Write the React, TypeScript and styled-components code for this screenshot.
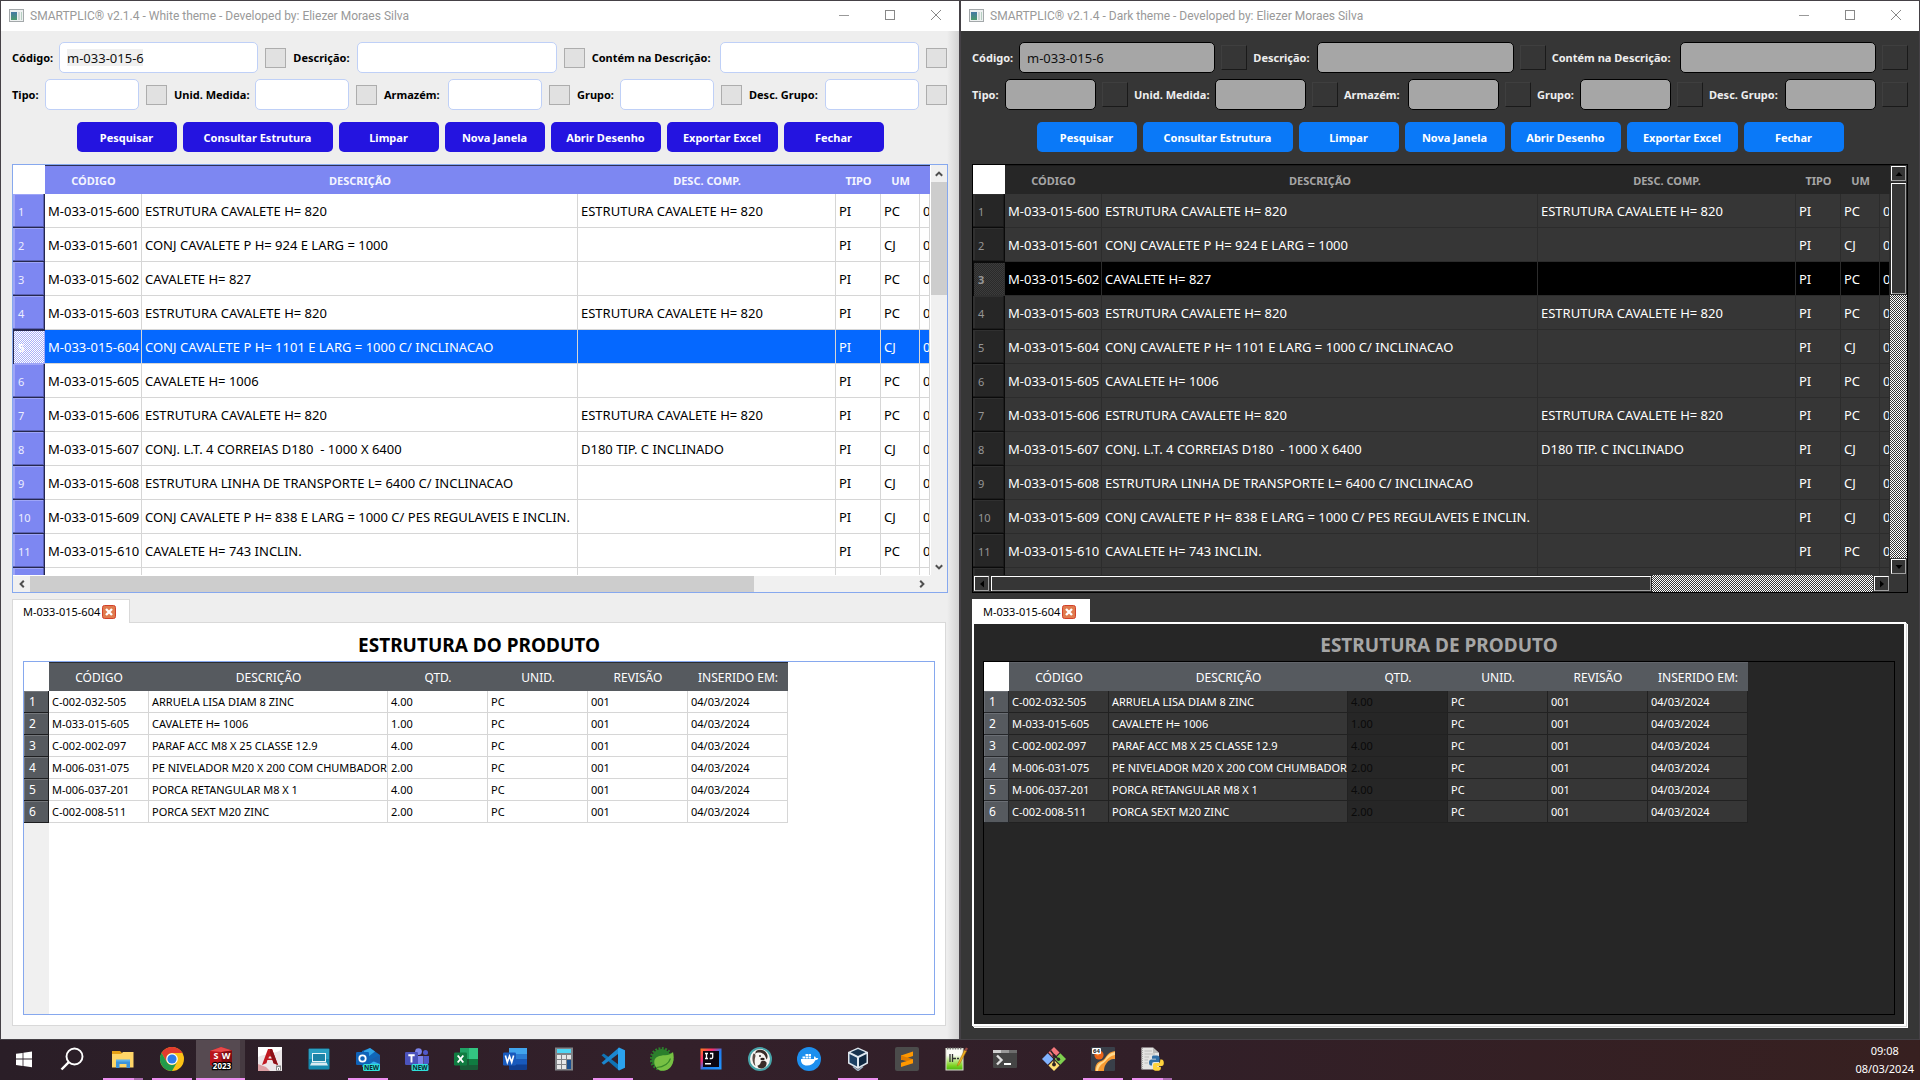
import React from "react";
import styled, { createGlobalStyle, css, ThemeProvider } from "styled-components";

const GlobalStyle = createGlobalStyle`
  *, *::before, *::after { box-sizing: border-box; }
  body {
    margin: 0;
    background: #2a1e26;
    font-family: "Noto Sans", "Open Sans", "Liberation Sans", sans-serif;
  }
  button, input { font-family: inherit; }
`;

const checker = (a: string, b: string) =>
  `repeating-conic-gradient(${a} 0 25%, ${b} 0 50%) 0 0 / 2px 2px`;

const whiteTheme = {
  id: "white",
  title: "SMARTPLIC® v2.1.4 - White theme - Developed by: Eliezer Moraes Silva",
  heading: "ESTRUTURA DO PRODUTO",
  dark: false,
  selected: 4,
  bg: "#eeeeee",
  label: "#000000",
  inputBg: "#ffffff",
  inputBorder: "#bfd0f7",
  textMark: "#f0f0f0",
  clearWidth: "23px",
  action: "#2414e0",
  frame: "#86a8ee",
  headTop: "#2c2f55",
  headBg: "#7d87f2",
  headText: "#f4f5ff",
  rowHead: "#7d87f2",
  rowHeadText: "#eceeff",
  rowHeadLight: "#9ea5f7",
  rowHeadDark: "#26284f",
  rowHeadShade: "#5a61b4",
  cellBg: "#ffffff",
  cellText: "#000000",
  line: "#d6d6d6",
  selBg: "#0568ff",
  selHead: checker("#ffffff", "#a9b0f8"),
  thumbH: "82%",
  paneBg: "#ffffff",
  headingText: "#000000",
  innerFrame: "#86a8ee",
  innerCorner: "#f0f0f0",
  innerHeadTop: "#2a2d31",
  innerHeadLight: "#74777b",
  innerHeadDark: "#1c1d1f",
  innerCell: "#ffffff",
  innerLine: "#d6d6d6",
  qtyBg: "#ffffff",
  qtyText: "#000000",
};

type Skin = typeof whiteTheme;

const darkTheme: Skin = {
  ...whiteTheme,
  id: "dark",
  title: "SMARTPLIC® v2.1.4 - Dark theme - Developed by: Eliezer Moraes Silva",
  heading: "ESTRUTURA DE PRODUTO",
  dark: true,
  selected: 2,
  bg: "#363636",
  label: "#eeeeee",
  inputBg: "#a6a6a6",
  inputBorder: "#000000",
  textMark: "#a6a6a6",
  clearWidth: "26px",
  action: "#0a79f8",
  frame: "#000000",
  headTop: "#1c1c1c",
  headBg: "#262626",
  headText: "#a6a6a6",
  rowHead: "#262626",
  rowHeadText: "#969696",
  rowHeadLight: "#303030",
  rowHeadDark: "#0b0b0b",
  rowHeadShade: "#1c1c1c",
  cellBg: "#363636",
  cellText: "#ffffff",
  line: "#2c2c2c",
  selBg: "#000000",
  selHead: checker("#3c3c3c", "#2a2a2a"),
  thumbH: "75%",
  paneBg: "#262626",
  headingText: "#a6a6a6",
  innerFrame: "#000000",
  innerCorner: "#262626",
  innerHeadTop: "#62656b",
  innerHeadLight: "#6a6e74",
  innerHeadDark: "#25272a",
  innerCell: "#363636",
  innerLine: "#212121",
  qtyBg: "#262626",
  qtyText: "#0a0a0a",
};

type T = { theme: Skin };

/* ---------- desktop and windows ---------- */

const Desktop = styled.div`
  min-height: 100vh;
  display: grid;
  grid-template-rows: minmax(0, 1fr) 40px;
  grid-template-columns: minmax(0, 1fr);
`;

const Windows = styled.main`
  display: grid;
  grid-template-columns: repeat(2, minmax(0, 1fr));
  background: #454146;
`;

const WindowFrame = styled.section<T>`
  display: flex;
  flex-direction: column;
  min-width: 0;
  margin: 1px;
  background: ${(p) =>
    p.theme.dark
      ? p.theme.bg
      : `linear-gradient(to left, #d2d2d2, ${p.theme.bg} 12px)`};
`;

const TitleBar = styled.header`
  height: 30px;
  display: flex;
  align-items: center;
  gap: 5px;
  padding-left: 8px;
  background: #fff;
  color: #999;
`;

const TitleText = styled.h1`
  flex: 1;
  margin: 0;
  font-family: Roboto, "Noto Sans", sans-serif;
  font-size: 12px;
  line-height: 16px;
  font-weight: 400;
  white-space: nowrap;
`;

const WindowButtons = styled.div`
  display: flex;
`;

const WindowButton = styled.button`
  width: 46px;
  height: 30px;
  padding: 0 0 2px;
  border: 0;
  background: none;
  display: grid;
  place-items: center;
`;

const Content = styled.div`
  flex: 1;
  min-height: 0;
  display: flex;
  flex-direction: column;
  padding: 11px;
`;

/* ---------- search form ---------- */

const SearchForm = styled.form`
  display: flex;
  flex-direction: column;
  gap: 6px;
`;

const FieldRow = styled.div`
  display: flex;
  align-items: center;
  gap: 6px;
`;

const FieldLabel = styled.label<T & { $width: number }>`
  flex: none;
  width: ${(p) => p.$width}px;
  padding-top: 1px;
  font-size: 11px;
  line-height: 16px;
  font-weight: 700;
  white-space: nowrap;
  color: ${(p) => p.theme.label};
`;

const TextInput = styled.input<T & { $marked: boolean }>`
  flex: 1 1 0;
  width: 0;
  min-width: 0;
  height: 31px;
  padding: 1px 7px 0;
  border: 1px solid ${(p) => p.theme.inputBorder};
  border-radius: 5px;
  outline: 0;
  font-size: 13px;
  color: #111;
  background: ${(p) =>
    p.$marked
      ? `linear-gradient(${p.theme.textMark}, ${p.theme.textMark}) 7px 6px / 76px 17px no-repeat ${p.theme.inputBg}`
      : p.theme.inputBg};
`;

const ClearButton = styled.button<T>`
  flex: none;
  width: ${(p) => p.theme.clearWidth};
  padding: 0;
  border: 1px solid;
  ${(p) =>
    p.theme.dark
      ? css`
          height: 25px;
          border-color: #3f3f3f #1a1a1a #1a1a1a #3f3f3f;
          background: #363636;
        `
      : css`
          height: 22px;
          border-color: transparent;
          box-shadow: inset 0 0 0 1px #adadad;
          background: #e1e1e1;
          background-clip: padding-box;
        `}
`;

const Actions = styled.div`
  display: flex;
  justify-content: center;
  gap: 6px;
  padding: 6px 0 12px;
`;

const ActionButton = styled.button<T & { $width: number }>`
  width: ${(p) => p.$width}px;
  height: 30px;
  padding: 2px 0 0;
  border: 0;
  border-radius: 5px;
  background: ${(p) => p.theme.action};
  color: #fff;
  font-size: 11px;
  line-height: 16px;
  font-weight: 700;
  white-space: nowrap;
`;

/* ---------- result grid ---------- */

const Panels = styled.div`
  flex: 1;
  min-height: 0;
  display: grid;
  grid-template-rows: repeat(2, minmax(0, 1fr));
  grid-template-columns: minmax(0, 1fr);
  gap: 6px;
`;

const ResultBox = styled.div<T>`
  min-height: 0;
  display: grid;
  grid-template-columns: minmax(0, 1fr) 17px;
  grid-template-rows: minmax(0, 1fr) 17px;
  border: 1px solid ${(p) => p.theme.frame};
  background: ${(p) => (p.theme.dark ? p.theme.bg : "#f0f0f0")};
`;

const Clip = styled.div`
  height: 0;
  min-height: 100%;
  overflow: hidden;
`;

const ResultTable = styled.table<T>`
  width: 100%;
  table-layout: fixed;
  border-spacing: 0;
  font-size: 13px;
  color: ${(p) => p.theme.cellText};
`;

const Col = styled.col<{ $width?: number }>`
  width: ${(p) => (p.$width ? `${p.$width}px` : "auto")};
`;

const CornerCell = styled.td`
  padding: 0;
  background: #fff;
`;

const HeadCell = styled.th<T>`
  height: 29px;
  padding: 2px 0 0;
  border-top: 1px solid ${(p) => p.theme.headTop};
  background: ${(p) => p.theme.headBg};
  color: ${(p) => p.theme.headText};
  font-size: 11px;
  line-height: 16px;
  font-weight: 700;
`;

const RowHead = styled.th<T & { $selected: boolean }>`
  height: 34px;
  padding: 2px 0 0 5px;
  text-align: left;
  font-size: 11px;
  line-height: 16px;
  font-weight: ${(p) => (p.$selected ? 700 : 400)};
  color: ${(p) => (p.$selected && !p.theme.dark ? "#fff" : p.theme.rowHeadText)};
  background: ${(p) => (p.$selected ? p.theme.selHead : p.theme.rowHead)};
  box-shadow: ${(p) =>
    p.$selected
      ? `inset 1px 1px 0 ${p.theme.rowHeadDark}, inset -1px -1px 0 ${p.theme.rowHeadLight}`
      : `inset -1px -1px 0 ${p.theme.rowHeadDark}, inset -2px -2px 0 ${p.theme.rowHeadShade}, inset 2px 1px 0 ${p.theme.rowHeadLight}`};
`;

const Cell = styled.td<T & { $selected: boolean }>`
  padding: 0 0 0 3px;
  overflow: hidden;
  white-space: pre;
  line-height: 18px;
  border-right: 1px solid ${(p) => p.theme.line};
  border-bottom: 1px solid ${(p) => p.theme.line};
  background: ${(p) => (p.$selected ? p.theme.selBg : p.theme.cellBg)};
  color: ${(p) => (p.$selected ? "#fff" : p.theme.cellText)};
`;

const ScrollBar = styled.div<T & { $vertical?: boolean }>`
  display: flex;
  flex-direction: ${(p) => (p.$vertical ? "column" : "row")};
  ${(p) =>
    !p.theme.dark &&
    (p.$vertical
      ? css`border-left: 1px solid #fff;`
      : css`border-top: 1px solid #fff;`)}
`;

const ArrowButton = styled.button<T & { $vertical?: boolean }>`
  flex: none;
  padding: 0;
  display: grid;
  place-items: center;
  ${(p) =>
    p.theme.dark
      ? css`
          width: 15px;
          height: 15px;
          margin: 1px;
          border: 1px solid;
          border-color: #fff #a0a0a0 #a0a0a0 #fff;
          background: #363636;
        `
      : css`
          width: ${p.$vertical ? 16 : 17}px;
          height: ${p.$vertical ? 17 : 16}px;
          border: 0;
          background: #f0f0f0;
        `}
`;

const Track = styled.div<T>`
  flex: 1;
  min-width: 0;
  min-height: 0;
  background: ${(p) => (p.theme.dark ? checker("#ffffff", "#373737") : "#f0f0f0")};
`;

const Thumb = styled.div<T & { $vertical?: boolean }>`
  width: ${(p) => (p.$vertical ? "100%" : p.theme.thumbH)};
  height: ${(p) => (p.$vertical ? "30%" : "100%")};
  background: #cdcdcd;
  ${(p) =>
    p.theme.dark &&
    css`
      border: 1px solid #2b2b2b;
      background: #363636;
      box-shadow: inset 1px 1px 0 #fff, inset -1px -1px 0 #a0a0a0;
    `}
`;

/* ---------- structure tab ---------- */

const TabArea = styled.div`
  min-height: 0;
  display: flex;
  flex-direction: column;
`;

const Tab = styled.div<T>`
  position: relative;
  z-index: 1;
  align-self: flex-start;
  display: flex;
  align-items: center;
  gap: 2px;
  width: 118px;
  height: 24px;
  margin-bottom: -1px;
  padding-left: 10px;
  border: 1px solid ${(p) => (p.theme.dark ? "#ffffff" : "#d9d9d9")};
  border-bottom: 0;
  background: #fff;
  font-size: 11px;
  line-height: 16px;
  white-space: nowrap;
  color: #000;
`;

const TabClose = styled.button`
  width: 14px;
  height: 14px;
  padding: 0;
  border: 0;
  background: none;
  display: block;
  line-height: 0;
`;

const Pane = styled.div<T>`
  flex: 1;
  min-height: 0;
  display: flex;
  flex-direction: column;
  margin: 0 2px 2px 0;
  background: ${(p) => p.theme.paneBg};
  ${(p) =>
    p.theme.dark
      ? css`
          padding: 0 9px 9px;
          border: 2px solid #fff;
          box-shadow: 1px 1px 0 #d9d9d9, 2px 2px 0 #fff;
        `
      : css`
          padding: 1px 10px 10px;
          border: 1px solid #d9d9d9;
        `}
`;

const PaneTitle = styled.h2<T>`
  margin: 0;
  padding-top: 7px;
  height: 37px;
  font-size: 19px;
  line-height: 28px;
  font-weight: 700;
  text-align: center;
  color: ${(p) => p.theme.headingText};
`;

const StructureBox = styled.div<T>`
  flex: 1;
  min-height: 0;
  border: 1px solid ${(p) => p.theme.innerFrame};
  overflow: hidden;
  background: linear-gradient(
    to right,
    ${(p) => p.theme.innerCorner} 25px,
    ${(p) => p.theme.paneBg} 25px
  );
`;

const StructureTable = styled.table`
  width: 764px;
  table-layout: fixed;
  border-spacing: 0;
  font-size: 11px;
`;

const StructureHead = styled.th<T>`
  height: 29px;
  padding: 1px 0 0;
  border-top: 1px solid ${(p) => p.theme.innerHeadTop};
  background: #565a5f;
  color: #fff;
  font-size: 12px;
  line-height: 16px;
  font-weight: 400;
`;

const StructureRowHead = styled.th<T>`
  height: 22px;
  padding: 0 0 0 5px;
  text-align: left;
  font-size: 12px;
  line-height: 16px;
  font-weight: 400;
  color: #fff;
  background: #565a5f;
  box-shadow: inset -1px -1px 0 ${(p) => p.theme.innerHeadDark},
    inset 1px 1px 0 ${(p) => p.theme.innerHeadLight};
`;

const StructureCell = styled.td<T & { $qty: boolean }>`
  padding: 0 0 0 3px;
  line-height: 16px;
  white-space: nowrap;
  border-right: 1px solid ${(p) => p.theme.innerLine};
  border-bottom: 1px solid ${(p) => p.theme.innerLine};
  background: ${(p) => (p.$qty ? p.theme.qtyBg : p.theme.innerCell)};
  color: ${(p) => (p.$qty ? p.theme.qtyText : p.theme.cellText)};
`;

/* ---------- data ---------- */

const fieldRows = [
  [
    { name: "Código:", width: 41, value: "m-033-015-6" },
    { name: "Descrição:", width: 58, value: "" },
    { name: "Contém na Descrição:", width: 122, value: "" },
  ],
  [
    { name: "Tipo:", width: 27, value: "" },
    { name: "Unid. Medida:", width: 75, value: "" },
    { name: "Armazém:", width: 58, value: "" },
    { name: "Grupo:", width: 37, value: "" },
    { name: "Desc. Grupo:", width: 70, value: "" },
  ],
];

const actions = [
  { name: "Pesquisar", width: 100 },
  { name: "Consultar Estrutura", width: 150 },
  { name: "Limpar", width: 100 },
  { name: "Nova Janela", width: 100 },
  { name: "Abrir Desenho", width: 110 },
  { name: "Exportar Excel", width: 111 },
  { name: "Fechar", width: 100 },
];

const resultHeads = ["CÓDIGO", "DESCRIÇÃO", "DESC. COMP.", "TIPO", "UM", ""];

const results = [
  ["M-033-015-600", "ESTRUTURA CAVALETE H= 820", "ESTRUTURA CAVALETE H= 820", "PI", "PC", "0"],
  ["M-033-015-601", "CONJ CAVALETE P H= 924 E LARG = 1000", "", "PI", "CJ", "0"],
  ["M-033-015-602", "CAVALETE H= 827", "", "PI", "PC", "0"],
  ["M-033-015-603", "ESTRUTURA CAVALETE H= 820", "ESTRUTURA CAVALETE H= 820", "PI", "PC", "0"],
  ["M-033-015-604", "CONJ CAVALETE P H= 1101 E LARG = 1000 C/ INCLINACAO", "", "PI", "CJ", "0"],
  ["M-033-015-605", "CAVALETE H= 1006", "", "PI", "PC", "0"],
  ["M-033-015-606", "ESTRUTURA CAVALETE H= 820", "ESTRUTURA CAVALETE H= 820", "PI", "PC", "0"],
  ["M-033-015-607", "CONJ. L.T. 4 CORREIAS D180  - 1000 X 6400", "D180 TIP. C INCLINADO", "PI", "CJ", "0"],
  ["M-033-015-608", "ESTRUTURA LINHA DE TRANSPORTE L= 6400 C/ INCLINACAO", "", "PI", "CJ", "0"],
  ["M-033-015-609", "CONJ CAVALETE P H= 838 E LARG = 1000 C/ PES REGULAVEIS E INCLIN.", "", "PI", "CJ", "0"],
  ["M-033-015-610", "CAVALETE H= 743 INCLIN.", "", "PI", "PC", "0"],
  ["", "", "", "", "", ""],
];

const structureHeads = ["CÓDIGO", "DESCRIÇÃO", "QTD.", "UNID.", "REVISÃO", "INSERIDO EM:"];

const structure = [
  ["C-002-032-505", "ARRUELA LISA DIAM 8 ZINC", "4.00", "PC", "001", "04/03/2024"],
  ["M-033-015-605", "CAVALETE H= 1006", "1.00", "PC", "001", "04/03/2024"],
  ["C-002-002-097", "PARAF ACC M8 X 25 CLASSE 12.9", "4.00", "PC", "001", "04/03/2024"],
  ["M-006-031-075", "PE NIVELADOR M20 X 200 COM CHUMBADOR", "2.00", "PC", "001", "04/03/2024"],
  ["M-006-037-201", "PORCA RETANGULAR M8 X 1", "4.00", "PC", "001", "04/03/2024"],
  ["C-002-008-511", "PORCA SEXT M20 ZINC", "2.00", "PC", "001", "04/03/2024"],
];

/* ---------- window parts ---------- */

const AppGlyph = () => (
  <svg width="16" height="14" viewBox="0 0 16 14" aria-hidden="true">
    <defs>
      <linearGradient id="appGlyph" x1="0" y1="0" x2="0" y2="1">
        <stop offset="0" stopColor="#4479a4" />
        <stop offset="1" stopColor="#4c9a6c" />
      </linearGradient>
    </defs>
    <rect x="0.5" y="0.5" width="14" height="12" fill="#eef1f1" stroke="#a3a8aa" />
    <rect x="2" y="3" width="6" height="8" fill="url(#appGlyph)" />
    <rect x="9" y="3" width="2" height="8" fill="#cfd8d5" />
    <rect x="12" y="3" width="1" height="8" fill="#b5cfc1" />
  </svg>
);

const Arrow = ({ turn, dark }: { turn: number; dark: boolean }) => (
  <svg width="10" height="10" viewBox="0 0 10 10" aria-hidden="true">
    <g transform={`rotate(${turn} 5 5)`}>
      {dark ? (
        <path d="M1.5 7 L5 3 L8.5 7 Z" fill="#000" />
      ) : (
        <path d="M1.8 6.8 L5 3.6 L8.2 6.8" fill="none" stroke="#505050" strokeWidth="2" />
      )}
    </g>
  </svg>
);

const AppWindow = ({ skin }: { skin: Skin }) => (
  <ThemeProvider theme={skin}>
    <WindowFrame aria-label={skin.title}>
      <TitleBar>
        <AppGlyph />
        <TitleText>{skin.title}</TitleText>
        <WindowButtons>
          <WindowButton type="button" aria-label="Minimizar">
            <svg width="10" height="10" aria-hidden="true">
              <path d="M0 5.5H10" stroke="#999" />
            </svg>
          </WindowButton>
          <WindowButton type="button" aria-label="Maximizar">
            <svg width="10" height="10" aria-hidden="true">
              <rect x="0.5" y="0.5" width="9" height="9" fill="none" stroke="#888" />
            </svg>
          </WindowButton>
          <WindowButton type="button" aria-label="Fechar janela">
            <svg width="10" height="10" aria-hidden="true">
              <path d="M0 0L10 10M10 0L0 10" stroke="#888" />
            </svg>
          </WindowButton>
        </WindowButtons>
      </TitleBar>
      <Content>
        <SearchForm onSubmit={(e) => e.preventDefault()}>
          {fieldRows.map((row, r) => (
            <FieldRow key={r}>
              {row.map((f, i) => {
                const id = `${skin.id}-${r}-${i}`;
                return (
                  <React.Fragment key={id}>
                    <FieldLabel htmlFor={id} $width={f.width}>
                      {f.name}
                    </FieldLabel>
                    <TextInput id={id} type="text" defaultValue={f.value} $marked={f.value !== ""} />
                    <ClearButton type="button" aria-label={`Limpar ${f.name}`} />
                  </React.Fragment>
                );
              })}
            </FieldRow>
          ))}
          <Actions>
            {actions.map((a) => (
              <ActionButton key={a.name} type="button" $width={a.width}>
                {a.name}
              </ActionButton>
            ))}
          </Actions>
        </SearchForm>
        <Panels>
          <ResultBox>
            <Clip>
              <ResultTable>
                <colgroup>
                  {[32, 97, 436, 258, 45, 39].map((w, i) => (
                    <Col key={i} $width={w} />
                  ))}
                  <Col />
                </colgroup>
                <thead>
                  <tr>
                    <CornerCell />
                    {resultHeads.map((h, i) => (
                      <HeadCell key={i} scope="col">
                        {h}
                      </HeadCell>
                    ))}
                  </tr>
                </thead>
                <tbody>
                  {results.map((row, r) => (
                    <tr key={r}>
                      <RowHead scope="row" $selected={r === skin.selected}>
                        {row[0] ? r + 1 : ""}
                      </RowHead>
                      {row.map((c, i) => (
                        <Cell key={i} $selected={r === skin.selected}>
                          {c}
                        </Cell>
                      ))}
                    </tr>
                  ))}
                </tbody>
              </ResultTable>
            </Clip>
            <ScrollBar $vertical>
              <ArrowButton type="button" $vertical aria-label="Rolar para cima">
                <Arrow turn={0} dark={skin.dark} />
              </ArrowButton>
              <Track>
                <Thumb $vertical />
              </Track>
              <ArrowButton type="button" $vertical aria-label="Rolar para baixo">
                <Arrow turn={180} dark={skin.dark} />
              </ArrowButton>
            </ScrollBar>
            <ScrollBar>
              <ArrowButton type="button" aria-label="Rolar para a esquerda">
                <Arrow turn={270} dark={skin.dark} />
              </ArrowButton>
              <Track>
                <Thumb />
              </Track>
              <ArrowButton type="button" aria-label="Rolar para a direita">
                <Arrow turn={90} dark={skin.dark} />
              </ArrowButton>
            </ScrollBar>
          </ResultBox>
          <TabArea>
            <Tab>
              <span>M-033-015-604</span>
              <TabClose type="button" aria-label="Fechar aba">
                <svg width="14" height="14" viewBox="0 0 14 14" aria-hidden="true">
                  <rect x="0.5" y="0.5" width="13" height="13" rx="2" fill="#e07b4e" stroke="#d2412b" />
                  <path d="M4 4L10 10M10 4L4 10" stroke="#fff" strokeWidth="2.4" />
                </svg>
              </TabClose>
            </Tab>
            <Pane>
              <PaneTitle>{skin.heading}</PaneTitle>
              <StructureBox>
                <StructureTable>
                  <colgroup>
                    {[25, 100, 239, 100, 100, 100, 100].map((w, i) => (
                      <Col key={i} $width={w} />
                    ))}
                  </colgroup>
                  <thead>
                    <tr>
                      <CornerCell />
                      {structureHeads.map((h) => (
                        <StructureHead key={h} scope="col">
                          {h}
                        </StructureHead>
                      ))}
                    </tr>
                  </thead>
                  <tbody>
                    {structure.map((row, r) => (
                      <tr key={r}>
                        <StructureRowHead scope="row">{r + 1}</StructureRowHead>
                        {row.map((c, i) => (
                          <StructureCell key={i} $qty={i === 2}>
                            {c}
                          </StructureCell>
                        ))}
                      </tr>
                    ))}
                  </tbody>
                </StructureTable>
              </StructureBox>
            </Pane>
          </TabArea>
        </Panels>
      </Content>
    </WindowFrame>
  </ThemeProvider>
);

/* ---------- taskbar ---------- */

const TaskBar = styled.footer`
  display: flex;
  align-items: stretch;
  background: linear-gradient(to right, #2a1e27, #33202a 35%, #311f28 60%, #372020);
`;

const SystemButtons = styled.div`
  display: flex;
  padding-right: 2px;
`;

const TaskButton = styled.button<{ $wide?: boolean; $active?: boolean }>`
  width: ${(p) => (p.$wide ? 49 : 48)}px;
  padding: 0;
  border: 0;
  display: grid;
  grid-template-rows: 38px 2px;
  place-items: center;
  background: ${(p) =>
    p.$active ? "linear-gradient(to right, #564a51 44px, #463a41 44px)" : "none"};
`;

const Running = styled.span<{ $full?: boolean; $stack?: boolean }>`
  width: ${(p) => (p.$full ? 49 : 40)}px;
  height: 2px;
  background: ${(p) =>
    p.$stack ? "linear-gradient(to right, #ec8ff0 31px, #a968ae 31px)" : "#ec8ff0"};
`;

const Clock = styled.time`
  margin-left: auto;
  padding: 0 6px 0 0;
  display: flex;
  flex-direction: column;
  align-items: center;
  justify-content: center;
  font-size: 11px;
  line-height: 18px;
  color: #fff;
`;

const txt = {
  fontFamily: "Noto Sans, sans-serif",
  fontWeight: 700,
} as const;

const NewBadge = ({ x }: { x: number }) => (
  <g>
    <rect x={x} y="17" width="17" height="7" rx="1.5" fill="#2fe0da" />
    <text x={x + 8.5} y="23" fontSize="6.5" textAnchor="middle" fill="#0b2a30" {...txt}>NEW</text>
  </g>
);

type Task = { name: string; run?: "one" | "stack" | "full"; art: React.ReactNode };

const systemTasks: Task[] = [
  {
    name: "Iniciar",
    art: <path d="M4 6.8L10.6 5.9V11.6H4ZM11.4 5.8L20 4.6V11.6H11.4ZM4 12.4H10.6V18.9L4 18ZM11.4 12.4H20V20.2L11.4 19Z" fill="#fff" />,
  },
  {
    name: "Pesquisar",
    art: (
      <g fill="none" stroke="#fff" strokeWidth="1.9">
        <circle cx="14.5" cy="9.5" r="8" />
        <path d="M8.8 15.2L1.5 22.5" strokeWidth="2.4" />
      </g>
    ),
  },
];

const tasks: Task[] = [
  {
    name: "Explorador de Arquivos",
    run: "stack",
    art: (
      <g>
        <path d="M1 4H9L11 6H22V20H1Z" fill="#e6a117" />
        <path d="M1 7H10L12 5H22.5V20.5H1Z" fill="#ffd668" />
        <path d="M5 21V13.5H19V21H15.5V17H8.5V21Z" fill="#3d94dc" />
        <rect x="5" y="12.5" width="14" height="2" fill="#5db1ec" />
      </g>
    ),
  },
  {
    name: "Google Chrome",
    run: "one",
    art: (
      <g>
        <circle cx="12" cy="12" r="12" fill="#fbc116" />
        <path d="M1.6 6A12 12 0 0 1 22.4 6H12A6 6 0 0 0 6.8 9L6.8 15Z" fill="#e33b2e" />
        <path d="M1.6 6A12 12 0 0 0 12 24L17.2 15A6 6 0 0 1 6.8 15Z" fill="#229a4b" />
        <circle cx="12" cy="12" r="5.8" fill="#fff" />
        <circle cx="12" cy="12" r="4.6" fill="#2f7de9" />
      </g>
    ),
  },
  {
    name: "SolidWorks 2023",
    run: "full",
    art: (
      <g>
        <path d="M1 4L12 0L23 3.5V17L12 22L1 18Z" fill="#b8141b" />
        <path d="M1 4L12 0L23 3.5L12.5 5Z" fill="#e8494a" />
        <path d="M12.5 5L23 3.5V17L12.5 22Z" fill="#7f0b10" />
        <text x="7" y="12" fontSize="9" textAnchor="middle" fill="#fff" {...txt}>S</text>
        <text x="17" y="12" fontSize="9" textAnchor="middle" fill="#fff" {...txt}>W</text>
        <text x="13" y="22" fontSize="8" textAnchor="middle" fill="#fff" stroke="#000" strokeWidth="2.4" paintOrder="stroke" {...txt}>2023</text>
      </g>
    ),
  },
  {
    name: "AutoCAD",
    art: (
      <g>
        <rect width="24" height="24" fill="#ece7e9" />
        <path d="M0 10C8 6 16 8 24 2V0H0Z" fill="#fff" />
        <path d="M0 24V17L8 20L12 24Z" fill="#dda0a4" />
        <path d="M10 2H14L20 18L15.5 16.2L14.6 13H9.4L8.5 16.2L4 18Z" fill="#c01a22" />
        <path d="M12 2H14L20 18L15.5 16.2L12 6Z" fill="#8c1118" />
        <path d="M11 9.5H13L13.6 11.5H10.4Z" fill="#ece7e9" />
        <rect x="18" y="18.5" width="5" height="5" fill="#8a8a8a" />
        <path d="M19.5 23V20.5H21.5V23" fill="none" stroke="#fff" />
      </g>
    ),
  },
  {
    name: "Gerenciador remoto",
    art: (
      <g>
        <rect x="1.5" y="1.5" width="21" height="21" rx="1" fill="#1489ae" />
        <rect x="2" y="2" width="20" height="10" fill="#2a9fc2" />
        <rect x="5.5" y="6.5" width="13" height="8" fill="#1c83a6" stroke="#e8f4f8" />
        <path d="M4.5 15.5H19.5L21 18.5H3Z" fill="#d7ebf2" />
      </g>
    ),
  },
  {
    name: "Outlook",
    run: "one",
    art: (
      <g>
        <path d="M6 4L14 1L24 8V20H6Z" fill="#1066b8" />
        <path d="M8 4L14 1L19 4.5L8 13Z" fill="#2fa3e6" />
        <path d="M24 8V21H8L24 10Z" fill="#32b1ee" />
        <path d="M14 13L24 8V17Z" fill="#175fad" />
        <rect x="0" y="5" width="13" height="13" rx="1.2" fill="#0f62b8" />
        <circle cx="6.5" cy="11.5" r="3.2" fill="none" stroke="#fff" strokeWidth="1.8" />
        <NewBadge x={7} />
      </g>
    ),
  },
  {
    name: "Teams",
    art: (
      <g>
        <circle cx="13.5" cy="4.6" r="3.4" fill="#7b83eb" />
        <circle cx="20.5" cy="5.6" r="2.5" fill="#5059c9" />
        <path d="M10 9H18.5V20H10Z" fill="#7b83eb" />
        <path d="M19 9H24V16A4 4 0 0 1 19 18Z" fill="#5059c9" />
        <rect x="0" y="5" width="13" height="13" rx="1.2" fill="#4b53bc" />
        <path d="M3.3 8.3H9.7M6.5 8.3V15.4" stroke="#fff" strokeWidth="1.9" />
        <NewBadge x={6.5} />
      </g>
    ),
  },
  {
    name: "Excel",
    art: (
      <g>
        <rect x="6" y="1" width="18" height="22" rx="1" fill="#185c37" />
        <rect x="6" y="1" width="9" height="11" fill="#21a366" />
        <rect x="15" y="1" width="9" height="11" fill="#33c481" />
        <rect x="15" y="12" width="9" height="6" fill="#107c41" />
        <rect x="0" y="5.5" width="13" height="13" rx="1.2" fill="#107c41" />
        <path d="M3.7 8.5L9.3 15.5M9.3 8.5L3.7 15.5" stroke="#fff" strokeWidth="1.9" />
      </g>
    ),
  },
  {
    name: "Word",
    art: (
      <g>
        <rect x="6" y="1" width="18" height="22" rx="1" fill="#103f91" />
        <rect x="6" y="1" width="18" height="6" fill="#41a5ee" />
        <rect x="6" y="7" width="18" height="5.5" fill="#2b7cd3" />
        <rect x="6" y="12.5" width="18" height="5" fill="#185abd" />
        <rect x="0" y="5.5" width="13" height="13" rx="1.2" fill="#185abd" />
        <path d="M2.4 8.5L4.3 15.3L6.5 9.2L8.7 15.3L10.6 8.5" fill="none" stroke="#fff" strokeWidth="1.6" />
      </g>
    ),
  },
  {
    name: "Calculadora",
    art: (
      <g>
        <rect x="3" y="0.5" width="18" height="23" fill="#808387" />
        <rect x="5" y="2" width="14" height="4" fill="#4fd6f5" />
        {[8, 13, 18].map((y) =>
          [5, 10, 15].map((x) => (
            <rect key={`${x}${y}`} x={x} y={y} width="4" height={x === 15 && y === 13 ? 5 : 4} fill={x === 15 && y > 8 ? "#1a4f8f" : "#e6e7e8"} />
          )),
        )}
      </g>
    ),
  },
  {
    name: "Visual Studio Code",
    run: "one",
    art: (
      <g>
        <path d="M0.5 8.2L2.8 6.4L18 18V23.5Z" fill="#0f73b5" />
        <path d="M18 0.5V6.2L2.8 17.8L0.5 15.8Z" fill="#1c86cf" />
        <path d="M18 0.5L24 3.2V20.8L18 23.5L17 22.5V1.5Z" fill="#2ba2ee" />
      </g>
    ),
  },
  {
    name: "Spring Tools",
    art: (
      <g>
        <circle cx="11.5" cy="12" r="10.6" fill="none" stroke="#2c7f2c" strokeWidth="2.6" strokeDasharray="1.9 1.43" />
        <circle cx="11.5" cy="12" r="10" fill="#2c7f2c" />
        <path d="M4.5 17C3 10 9 8.5 15 8.3C19 8 21.5 7 23 5C25.5 15 21 23.8 13 23.8C8.500 23.800 6 21 4.500 17Z" fill="#77c043" />
        <path d="M6.500 20.500C12 20 18.500 17.500 20.500 11.500" fill="none" stroke="#3a8a2a" strokeWidth="1.2" />
      </g>
    ),
  },
  {
    name: "IntelliJ IDEA",
    art: (
      <g>
        <defs>
          <linearGradient id="ideaEdge" x1="0" y1="0" x2="1" y2="1">
            <stop offset="0" stopColor="#fc801d" />
            <stop offset="0.3" stopColor="#fe2b6d" />
            <stop offset="0.55" stopColor="#1e7df0" />
            <stop offset="1" stopColor="#2298ff" />
          </linearGradient>
        </defs>
        <rect x="1.5" y="1.5" width="21" height="21" fill="url(#ideaEdge)" />
        <rect x="4" y="4" width="16" height="16" fill="#0c0610" />
        <path d="M6 6.5H9M7.5 6.5V11.5M6 11.5H9M11 6.5H13.7V10Q13.7 11.6 12 11.5H10.7" fill="none" stroke="#fff" strokeWidth="1.3" />
        <rect x="6" y="16" width="6" height="1.5" fill="#fff" />
      </g>
    ),
  },
  {
    name: "DBeaver",
    art: (
      <g>
        <circle cx="12" cy="12" r="11" fill="#f7f4f1" stroke="#46a3a8" strokeWidth="2" />
        <path d="M8 4C11 2 16 2.500 18 5.500C20 8 20 11 18.500 12.500C17.500 9 15.500 6 12 5.500C10 5.200 8.500 5.500 7 7Z" fill="#3a2c28" />
        <path d="M5.500 6.500C7.500 6.500 8 8.500 7 11C6.500 13 6.500 16 7.500 19C4.500 17 3.500 10.500 5.500 6.500Z" fill="#5a4a44" />
        <path d="M13 14.500C15 13 17.500 13.500 18.500 15.500C19 18 17.500 20.500 15 21.300C12 22 9.500 21 9.500 18.500C11 18.500 12.500 17 13 14.500Z" fill="#3a2c28" />
        <ellipse cx="14.500" cy="12" rx="2.200" ry="1.300" fill="#2a1f1b" />
        <circle cx="12" cy="9" r="0.9" fill="#201815" />
      </g>
    ),
  },
  {
    name: "Docker",
    art: (
      <g>
        <circle cx="12" cy="12" r="12" fill="#1d8fee" />
        <path d="M4 12H17C17 10.5 17 10 17.7 9.2C18.6 9.8 18.8 10.5 18.8 11.2C19.8 11 20.6 11.1 21.3 11.6C20.6 12.8 19.6 13.2 18.3 13.2C16.6 17 13.8 18.5 10 18.5C5.8 18.5 3.7 16 4 12Z" fill="#fff" />
        <path d="M5.5 9.5H8V11.5H5.5ZM8.5 9.5H11V11.5H8.5ZM11.5 9.5H14V11.5H11.5ZM8.5 7H11V9H8.5ZM11.5 7H14V9H11.5Z" fill="#fff" />
      </g>
    ),
  },
  {
    name: "VirtualBox",
    run: "one",
    art: (
      <g>
        <path d="M12 0.5L22 5V16.5L12 22L2 16.5V5Z" fill="#dfe7ef" />
        <path d="M12 2L19.5 5.3L12 9L4.5 5.3Z" fill="#16324e" />
        <path d="M3.5 7L11 10.7V19.5L3.5 15.5Z" fill="#1c3f63" />
        <path d="M20.5 7L13 10.7V19.5L20.5 15.5Z" fill="#0f2740" />
        <path d="M7 19.5L12 23.5L17 19.5" fill="none" stroke="#9fb2c4" strokeWidth="1.6" />
      </g>
    ),
  },
  {
    name: "Sublime Text",
    art: (
      <g>
        <rect width="24" height="24" rx="2" fill="#4b4b4b" />
        <path d="M18 4.5V9L6 13V8.5Z" fill="#ff9800" />
        <path d="M6 8.5L18 12.3V16.2L6 12.6Z" fill="#e07c00" />
        <path d="M18 12.3V16.2L6 20V15.8Z" fill="#ff9800" />
      </g>
    ),
  },
  {
    name: "Notepad++",
    art: (
      <g>
        <defs>
          <linearGradient id="noteFill" x1="0" y1="0" x2="0" y2="1">
            <stop offset="0.3" stopColor="#fbfdf6" />
            <stop offset="0.8" stopColor="#7ed321" />
            <stop offset="1" stopColor="#47b512" />
          </linearGradient>
        </defs>
        <rect x="2" y="1.5" width="17" height="21.5" fill="url(#noteFill)" stroke="#d9dccf" />
        <path d="M3 1.5H18" stroke="#777" strokeWidth="2" strokeDasharray="1.4 1.2" />
        <path d="M6 7V15M8.5 7V15M9 11.5H12M13 11.5H15" stroke="#333" strokeWidth="1.3" />
        <path d="M20.5 3L14 16.5L13.2 19L15.5 17.3L22.5 4Z" fill="#f2b01e" stroke="#a3711a" strokeWidth="0.6" />
        <path d="M20.5 3L22 0.5L24 1.5L22.5 4Z" fill="#9b4a43" />
      </g>
    ),
  },
  {
    name: "Terminal",
    art: (
      <g>
        <rect x="0" y="3" width="24" height="18" rx="1" fill="#454545" />
        <path d="M0 3H8V6H0Z" fill="#cfcfcf" />
        <path d="M8 3H16V6H8Z" fill="#999" />
        <path d="M16 3H24V6H16Z" fill="#6d6d6d" />
        <path d="M4 8.5L8.5 13L4 17.5" fill="none" stroke="#e0e0e0" strokeWidth="2.4" />
        <rect x="11" y="16" width="7" height="2" fill="#fff" />
      </g>
    ),
  },
  {
    name: "Git Bash",
    art: (
      <g>
        <path d="M12 0L17.5 5.500L12 11L6.500 5.500Z" fill="#f3777b" />
        <path d="M5.700 6.300L11.400 12L5.700 17.700L0 12Z" fill="#80b3ff" />
        <path d="M18.300 6.300L24 12L18.300 17.700L12.600 12Z" fill="#7fd04f" />
        <path d="M12 13L17.500 18.500L12 24L6.500 18.500Z" fill="#ffdf73" />
        <path d="M8.5 3.5L12 8V17M12 8L16 12" fill="none" stroke="#2c2226" strokeWidth="1.5" />
        <circle cx="12" cy="17.5" r="1.9" fill="#2c2226" />
        <circle cx="16.5" cy="12.3" r="1.7" fill="#2c2226" />
        <circle cx="12" cy="8.5" r="1.6" fill="#2c2226" />
      </g>
    ),
  },
  {
    name: "Ferramenta 64 bits",
    run: "one",
    art: (
      <g>
        <rect width="24" height="24" rx="1" fill="#393f49" />
        <circle cx="8" cy="8" r="4.6" fill="#e8641a" />
        <circle cx="6.8" cy="6.6" r="1.8" fill="#f8a45c" />
        <path d="M24 4V12C19 12 17 14 15 17C13 20 13 22 13 24H4C4 18 6 15 10 14C15 13 15 5 24 4Z" fill="#f59a33" />
        <path d="M24 5V8C18 9 16 13 13 15.5C10 17.5 8 19 7 24H5C5 18 8 16 11 14.8C15 13 16 6 24 5Z" fill="#ffd98c" />
        <rect x="1" y="1" width="9" height="6" rx="1" fill="#fff" />
        <text x="5.5" y="6.4" fontSize="6" textAnchor="middle" fill="#222" {...txt}>64</text>
      </g>
    ),
  },
  {
    name: "Python",
    run: "stack",
    art: (
      <g>
        <path d="M1.5 0.5H13L19 6V22.5H1.5Z" fill="#e4e4e2" />
        <path d="M13 0.5L19 6H13Z" fill="#b9b9b7" />
        <path d="M2 1V22" stroke="#9a9a98" strokeWidth="1.6" strokeDasharray="1 1" />
        <path d="M4.5 4H12M4.5 7H15M4.5 10H9M4.5 13H8M4.5 16H8" stroke="#bcbcba" />
        <path d="M13 8.5H17Q19.5 8.5 19.5 11V15H14Q12 15 12 17V18.5H11Q9 18.5 9 15.5Q9 12.5 11.5 12.5H16V11.7H12V10Q12 8.5 13 8.5Z" fill="#2f6ea6" />
        <path d="M20.2 12.5H21.5Q23.8 12.5 23.8 16Q23.8 19 21.5 19H17V19.8H20.8V21.5Q20.8 23.8 17 23.8Q13 23.8 13 21.5V18Q13 16 15 16H18.5Q20.2 16 20.2 14Z" fill="#ffd33c" />
      </g>
    ),
  },
];

const TaskItem = ({ task, wide }: { task: Task; wide?: boolean }) => (
  <TaskButton type="button" aria-label={task.name} $wide={wide} $active={task.run === "full"}>
    <svg width="24" height="24" viewBox="0 0 24 24" aria-hidden="true">
      {task.art}
    </svg>
    {task.run && <Running $full={task.run === "full"} $stack={task.run === "stack"} />}
  </TaskButton>
);

const App = () => (
  <>
    <GlobalStyle />
    <Desktop>
      <Windows>
        <AppWindow skin={whiteTheme} />
        <AppWindow skin={darkTheme} />
      </Windows>
      <TaskBar>
        <SystemButtons>
          {systemTasks.map((t) => (
            <TaskItem key={t.name} task={t} />
          ))}
        </SystemButtons>
        {tasks.map((t) => (
          <TaskItem key={t.name} task={t} wide />
        ))}
        <Clock dateTime="2024-03-08T09:08">
          <span>09:08</span>
          <span>08/03/2024</span>
        </Clock>
      </TaskBar>
    </Desktop>
  </>
);

export default App;
